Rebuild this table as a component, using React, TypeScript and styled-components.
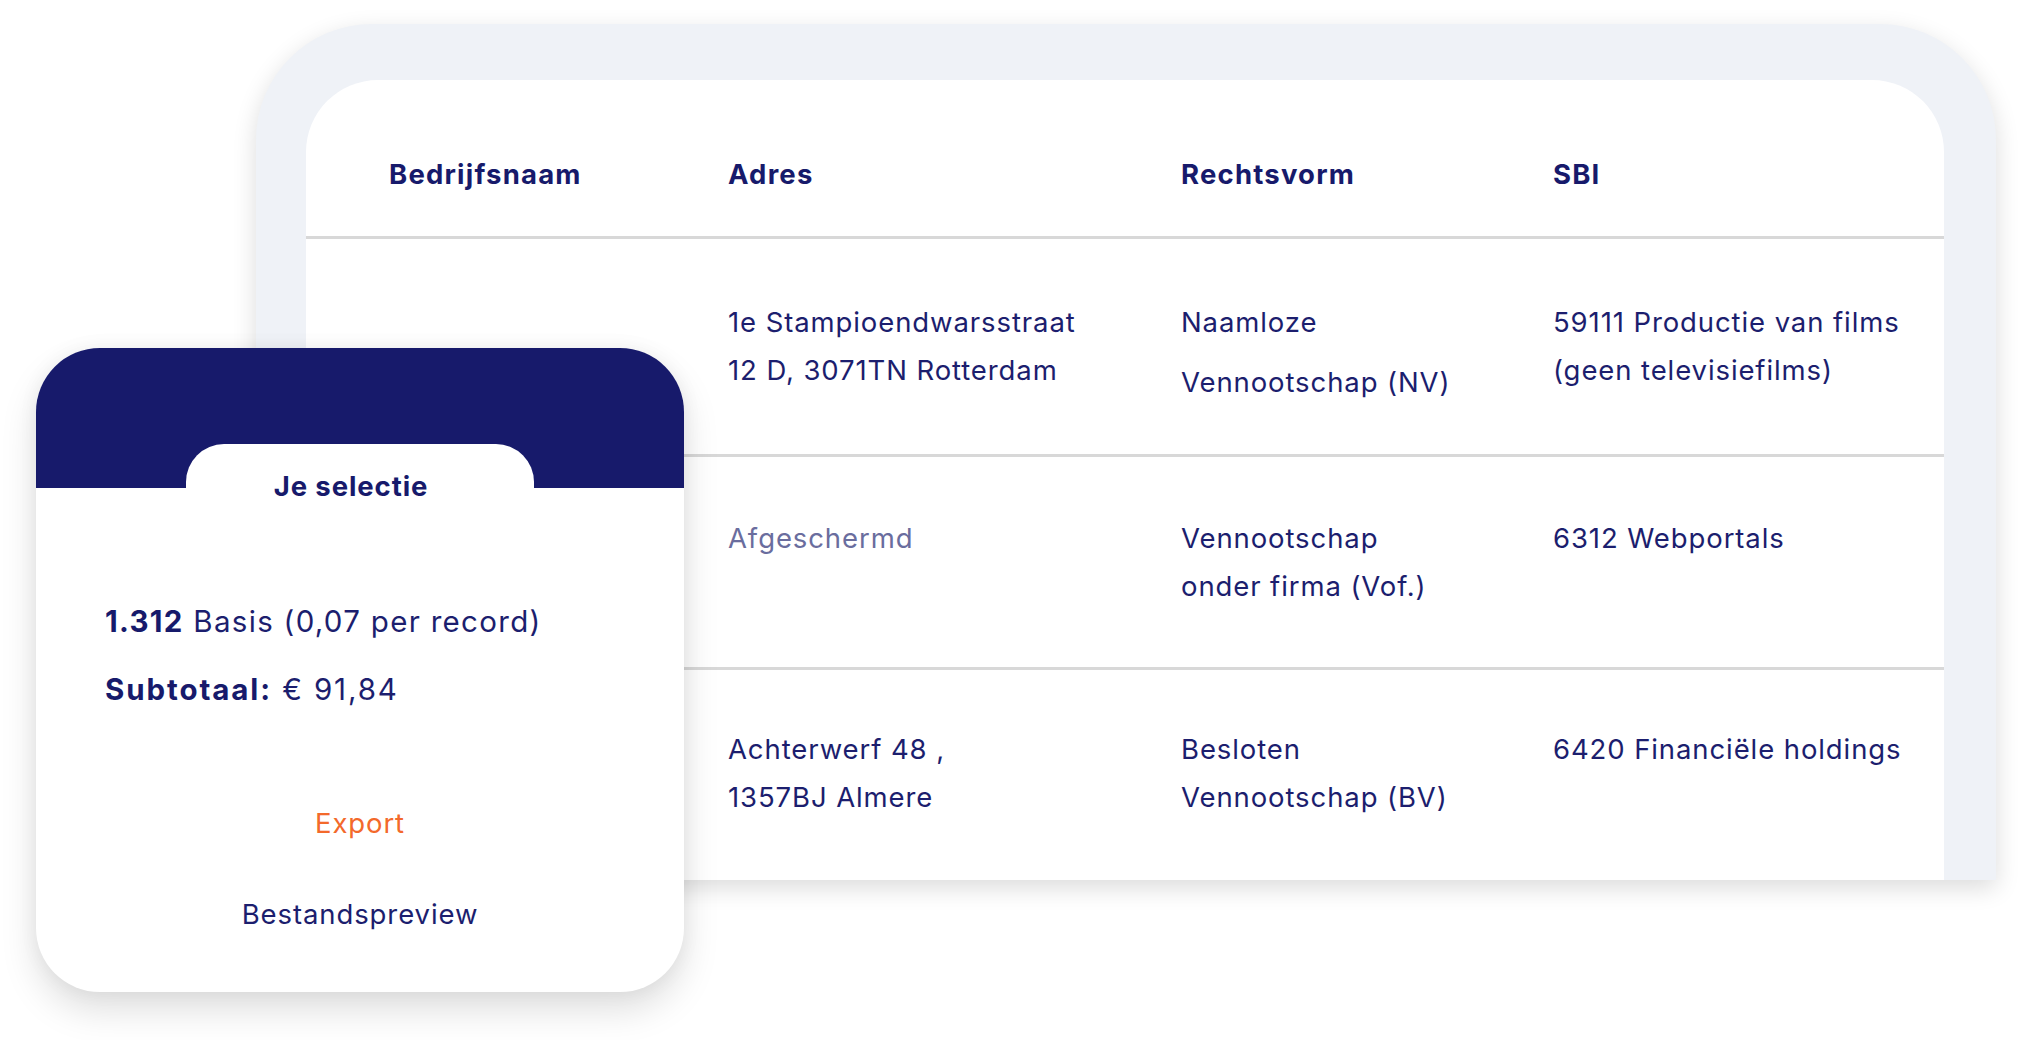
import React from "react";
import styled, { createGlobalStyle } from "styled-components";

const NAVY = "#171a6b";
const TEXT = "#1c1e6e";

const GlobalStyle = createGlobalStyle`
  html, body {
    margin: 0;
    padding: 0;
    background: #ffffff;
  }
  body {
    font-family: Inter, "Noto Sans", Roboto, sans-serif;
    color: ${TEXT};
  }
`;

const Stage = styled.div`
  position: relative;
  width: 2032px;
  height: 1040px;
  overflow: hidden;
  box-sizing: border-box;
  padding: 24px 0 0 256px;
  background: #ffffff;
`;

const Frame = styled.div`
  width: 1740px;
  height: 856px;
  box-sizing: border-box;
  padding: 56px 52px 0 50px;
  background: #eff2f7;
  border-radius: 116px 116px 0 0;
  box-shadow: 0 8px 24px rgba(0, 0, 0, 0.14);
`;

const Panel = styled.div`
  height: 100%;
  background: #ffffff;
  border-radius: 72px 72px 0 0;
  display: flex;
  flex-direction: column;
  overflow: hidden;
`;

const TableRow = styled.div<{ $pt: number; $h?: number; $divider?: boolean }>`
  display: grid;
  grid-template-columns: 339px 453px 372px 1fr;
  align-items: start;
  box-sizing: border-box;
  padding: ${(p) => p.$pt}px 0 0 83px;
  ${(p) => (p.$h ? `height: ${p.$h}px; flex-shrink: 0;` : "flex: 1;")}
  border-bottom: ${(p) => (p.$divider ? "3px solid #d8d8d8" : "none")};
`;

const HeadCell = styled.div`
  font-size: 27.5px;
  line-height: 48px;
  font-weight: 700;
  letter-spacing: 1.2px;
  color: ${NAVY};
  white-space: nowrap;
`;

const Cell = styled.div<{ $gap?: number; $muted?: boolean }>`
  display: flex;
  flex-direction: column;
  gap: ${(p) => p.$gap ?? 0}px;
  font-size: 27.5px;
  line-height: 48px;
  font-weight: 400;
  letter-spacing: 0.9px;
  color: ${(p) => (p.$muted ? "#6a6d9e" : TEXT)};
  white-space: nowrap;
`;

const Line = styled.span`
  display: block;
`;

const Card = styled.div`
  position: absolute;
  left: 36px;
  top: 348px;
  width: 648px;
  height: 644px;
  background: #ffffff;
  border-radius: 64px;
  overflow: hidden;
  display: flex;
  flex-direction: column;
  box-shadow: 0 18px 36px rgba(0, 0, 0, 0.13), 0 0 20px rgba(0, 0, 0, 0.05);
`;

const CardHead = styled.div`
  height: 140px;
  flex-shrink: 0;
  background: ${NAVY};
  display: flex;
  justify-content: center;
  align-items: flex-end;
`;

const Tab = styled.div`
  width: 348px;
  height: 44px;
  box-sizing: border-box;
  padding: 18px 18px 0 0;
  background: #ffffff;
  border-radius: 38px 38px 0 0;
  text-align: center;
  font-size: 27.5px;
  line-height: 48px;
  font-weight: 700;
  letter-spacing: 0.9px;
  color: ${NAVY};
  white-space: nowrap;
`;

const CardBody = styled.div`
  display: flex;
  flex-direction: column;
  padding-top: 99px;
`;

const Summary = styled.div`
  padding-left: 69px;
`;

const SummaryLine = styled.div<{ $spacing: number }>`
  font-size: 29.5px;
  line-height: 68px;
  letter-spacing: ${(p) => p.$spacing}px;
  color: ${TEXT};
  white-space: nowrap;

  strong {
    font-weight: 700;
    color: ${NAVY};
  }
`;

const Actions = styled.div`
  margin-top: 76px;
  display: flex;
  flex-direction: column;
  align-items: center;
  gap: 43px;
`;

const ActionLink = styled.a<{ $accent?: boolean }>`
  font-size: 27.5px;
  line-height: 48px;
  letter-spacing: 0.9px;
  color: ${(p) => (p.$accent ? "#f3692b" : TEXT)};
  text-decoration: none;
  cursor: pointer;
`;

type Row = {
  adres: string[];
  muted?: boolean;
  rechtsvorm: string[];
  rvGap?: number;
  sbi: string[];
  pt: number;
  h?: number;
  divider?: boolean;
};

const rows: Row[] = [
  {
    adres: ["1e Stampioendwarsstraat", "12 D, 3071TN Rotterdam"],
    rechtsvorm: ["Naamloze", "Vennootschap (NV)"],
    rvGap: 12,
    sbi: ["59111 Productie van films", "(geen televisiefilms)"],
    pt: 59,
    h: 218,
    divider: true,
  },
  {
    adres: ["Afgeschermd"],
    muted: true,
    rechtsvorm: ["Vennootschap", "onder firma (Vof.)"],
    sbi: ["6312 Webportals"],
    pt: 57,
    h: 213,
    divider: true,
  },
  {
    adres: ["Achterwerf 48 ,", "1357BJ Almere"],
    rechtsvorm: ["Besloten", "Vennootschap (BV)"],
    sbi: ["6420 Financiële holdings"],
    pt: 55,
  },
];

export default function App() {
  return (
    <>
      <GlobalStyle />
      <Stage>
        <Frame>
          <Panel>
            <TableRow $pt={70} $h={159} $divider>
              <HeadCell>Bedrijfsnaam</HeadCell>
              <HeadCell>Adres</HeadCell>
              <HeadCell>Rechtsvorm</HeadCell>
              <HeadCell>SBI</HeadCell>
            </TableRow>
            {rows.map((r, i) => (
              <TableRow key={i} $pt={r.pt} $h={r.h} $divider={r.divider}>
                <Cell />
                <Cell $muted={r.muted}>
                  {r.adres.map((l) => (
                    <Line key={l}>{l}</Line>
                  ))}
                </Cell>
                <Cell $gap={r.rvGap}>
                  {r.rechtsvorm.map((l) => (
                    <Line key={l}>{l}</Line>
                  ))}
                </Cell>
                <Cell>
                  {r.sbi.map((l) => (
                    <Line key={l}>{l}</Line>
                  ))}
                </Cell>
              </TableRow>
            ))}
          </Panel>
        </Frame>

        <Card>
          <CardHead>
            <Tab>Je selectie</Tab>
          </CardHead>
          <CardBody>
            <Summary>
              <SummaryLine $spacing={1.3}>
                <strong>1.312</strong> Basis (0,07 per record)
              </SummaryLine>
              <SummaryLine $spacing={1.9}>
                <strong>Subtotaal:</strong> € 91,84
              </SummaryLine>
            </Summary>
            <Actions>
              <ActionLink $accent>Export</ActionLink>
              <ActionLink>Bestandspreview</ActionLink>
            </Actions>
          </CardBody>
        </Card>
      </Stage>
    </>
  );
}
